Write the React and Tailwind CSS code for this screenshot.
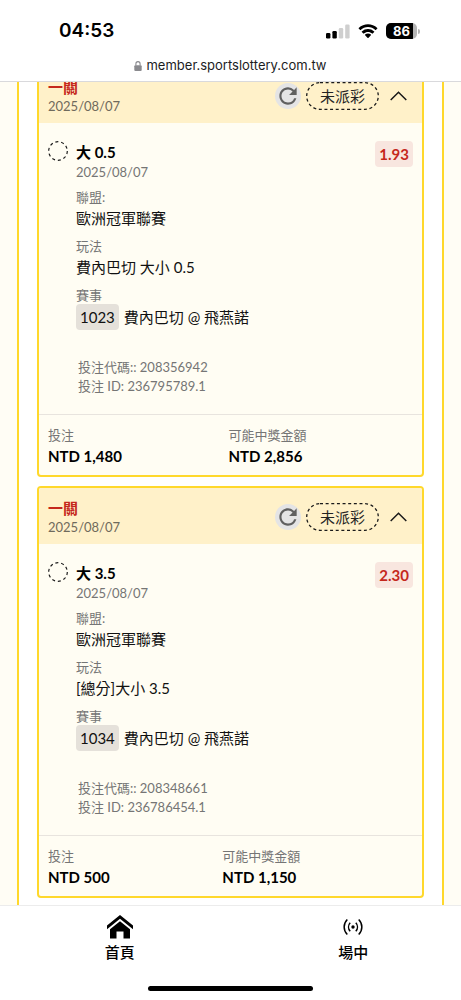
import { Fragment } from "react";
import { MdRefresh } from "react-icons/md";

const bets = [
  {
    title: "一關",
    date: "2025/08/07",
    status: "未派彩",
    pick: "大 0.5",
    odds: "1.93",
    details: [
      { label: "聯盟:", value: "歐洲冠軍聯賽" },
      { label: "玩法", value: "費內巴切 大小 0.5" },
    ],
    code: "1023",
    match: "費內巴切 @ 飛燕諾",
    betCode: "208356942",
    betId: "236795789.1",
    stake: "NTD 1,480",
    payout: "NTD 2,856",
  },
  {
    title: "一關",
    date: "2025/08/07",
    status: "未派彩",
    pick: "大 3.5",
    odds: "2.30",
    details: [
      { label: "聯盟:", value: "歐洲冠軍聯賽" },
      { label: "玩法", value: "[總分]大小 3.5" },
    ],
    code: "1034",
    match: "費內巴切 @ 飛燕諾",
    betCode: "208348661",
    betId: "236786454.1",
    stake: "NTD 500",
    payout: "NTD 1,150",
  },
];

const StatusBar = () => (
  <header className="shrink-0 border-b border-[#d9d9dc] bg-white pt-4 font-['Inter',sans-serif] text-black">
    <div className="flex h-[30px] items-center justify-between pr-[41px] pl-[59px]">
      <span className="text-[19px] font-semibold">04:53</span>
      <div className="flex items-center gap-2">
        {/* Signal */}
        <svg width="24" height="15" viewBox="0 0 24 15" aria-hidden="true">
          <rect x="0" y="9" width="4.4" height="5.5" rx="1.2" />
          <rect x="6.4" y="7" width="4.4" height="7.5" rx="1.2" />
          <rect x="12.8" y="4" width="4.4" height="10.5" rx="1.2" fill="#cfcfcf" />
          <rect x="19.2" y="0.5" width="4.4" height="14" rx="1.2" fill="#cfcfcf" />
        </svg>
        {/* Wifi */}
        <svg width="20" height="15" viewBox="0 0 20 15" aria-hidden="true">
          <path d="M10 3.1c2.8 0 5.4 1.1 7.3 2.9.2.2.4.2.6 0l1.4-1.5c.2-.2.2-.4 0-.6C14.1-1 5.9-1 .7 3.9c-.2.2-.2.4 0 .6L2.1 6c.2.2.4.2.6 0C4.6 4.2 7.2 3.1 10 3.1z" />
          <path d="M10 7.9c1.5 0 3 .6 4.1 1.6.2.2.4.2.6 0l1.5-1.5c.2-.2.2-.4 0-.6-3.5-3.3-8.900-3.300-12.400 0-.2.2-.2.4 0 .6l1.500 1.500c.2.2.4.2.6 0 1.100-1 2.600-1.600 4.100-1.600z" />
          <path d="M12.900 11.200c.2-.2.2-.4 0-.6-1.700-1.400-4.100-1.400-5.800 0-.2.2-.2.4 0 .6l2.600 2.700c.2.2.4.2.6 0z" />
        </svg>
        {/* Battery */}
        <div className="flex items-center gap-px">
          <div className="flex h-4 w-[31px] overflow-hidden rounded-[5px] bg-[#b5b5b5]">
            <span className="flex w-[27px] items-center justify-center bg-black pl-1 text-[13px] leading-4 font-bold text-white">
              86
            </span>
          </div>
          <div className="h-[5px] w-0.5 rounded-r-full bg-[#b5b5b5]"></div>
        </div>
      </div>
    </div>
    <div className="mt-[5px] flex h-[30px] items-center justify-center gap-1">
      <svg width="8" height="10" viewBox="0 0 8 10" aria-hidden="true">
        <rect x="0.3" y="4.2" width="7.4" height="5.8" rx="1.1" fill="#8a8a8e" />
        <path d="M1.9 4.6V2.9a2.1 2.3 0 0 1 4.2 0v1.7" fill="none" stroke="#8a8a8e" strokeWidth="1.1" />
      </svg>
      <span className="text-[13px] text-[#1c1c1e]">member.sportslottery.com.tw</span>
    </div>
  </header>
);

const BetCard = ({ bet }) => (
  <article className="shrink-0 overflow-hidden rounded-[4px] border-2 border-[#ffd82b] bg-[#fffdf3]">
    <div className="flex items-center justify-between bg-[#fff1c9] px-[9px] pt-[10px] pb-2">
      <div>
        <h2 className="text-[15px] leading-5 font-bold text-[#c5281c]">{bet.title}</h2>
        <p className="text-[13px] leading-[18px] text-[#6f6a5c]">{bet.date}</p>
      </div>
      <div className="flex items-center">
        <button
          aria-label="重新整理"
          className="flex size-[26px] items-center justify-center rounded-full bg-[#e4e4e5] text-[#606060]"
        >
          <MdRefresh size={26} />
        </button>
        <span className="relative ml-[5px] flex h-7 w-[73px] items-center justify-center text-[15px] text-[#222]">
          {/* Dashed outline */}
          <svg className="absolute inset-0 size-full" viewBox="0 0 73 28" fill="none" aria-hidden="true">
            <rect x="0.7" y="0.7" width="71.6" height="26.6" rx="13.3" stroke="#1a1a1a" strokeWidth="1.3" strokeDasharray="3 2.64" />
          </svg>
          {bet.status}
        </span>
        <button aria-label="收合" className="ml-[11px] pr-[6px]">
          <svg width="17" height="10" viewBox="0 0 17 10" fill="none" stroke="#1a1a1a" strokeWidth="1.5">
            <path d="M0.7 9 8.5 1.2 16.3 9" />
          </svg>
        </button>
      </div>
    </div>

    <div className="flex items-start gap-2 px-[9px] pt-[18px] pb-[18px]">
      <svg width="20" height="20" viewBox="0 0 20 20" fill="none" stroke="#1a1a1a" aria-hidden="true">
        <circle cx="10" cy="10" r="9.3" strokeWidth="1.2" strokeDasharray="3 2.84" />
      </svg>
      <div className="flex-1">
        <h3 className="text-[15px] leading-[22px] font-bold text-black">{bet.pick}</h3>
        <p className="text-[13px] leading-[18px] text-[#757575]">{bet.date}</p>
        <dl>
          {bet.details.map((item) => (
            <Fragment key={item.label}>
              <dt className="mt-[7px] text-[13px] leading-[18px] text-[#757575]">{item.label}</dt>
              <dd className="text-[15px] leading-6 text-[#111]">{item.value}</dd>
            </Fragment>
          ))}
          <dt className="mt-[7px] text-[13px] leading-[18px] text-[#757575]">賽事</dt>
          <dd className="flex items-center gap-[5px] text-[15px] leading-[26px] text-[#111]">
            <span className="rounded-[4px] bg-[#e5e1da] px-1">{bet.code}</span>
            {bet.match}
          </dd>
        </dl>
        <div className="mt-7 pl-0.5 text-[13px] leading-[19px] text-[#757575]">
          <p>投注代碼:: {bet.betCode}</p>
          <p>投注 ID: {bet.betId}</p>
        </div>
      </div>
      <span className="rounded-[4px] bg-[#f8e6df] px-1 text-[15px] leading-[26px] font-bold text-[#c5281c]">
        {bet.odds}
      </span>
    </div>

    <dl className="flex border-t border-[#e8e4de] px-[9px] pt-[11px] pb-[7px]">
      <div className="flex-auto">
        <dt className="text-[13px] leading-[18px] text-[#757575]">投注</dt>
        <dd className="text-[15px] leading-6 font-bold text-black">{bet.stake}</dd>
      </div>
      <div className="flex-auto">
        <dt className="text-[13px] leading-[18px] text-[#757575]">可能中獎金額</dt>
        <dd className="text-[15px] leading-6 font-bold text-black">{bet.payout}</dd>
      </div>
    </dl>
  </article>
);

const BottomNav = () => (
  <footer className="shrink-0 overflow-hidden border-t border-[#ececec] bg-white">
    <nav className="grid grid-cols-[51%_51%] pl-[3px] text-[15px] leading-5 font-medium text-black">
      <a href="#home" className="flex flex-col items-center gap-[3px] pt-[9px]">
        <svg width="26" height="24" viewBox="0 0 26 24" aria-hidden="true">
          <path d="M13 0 26 10.5v3.7L13 3.7 0 14.2v-3.7z" />
          <path d="M13 6.2 23 14.2V23.5h-6.5V16.5h-7v7H3V14.2z" />
        </svg>
        首頁
      </a>
      <a href="#live" className="flex flex-col items-center gap-[3px] pt-[9px]">
        <svg width="20" height="24" viewBox="0 0 20 24" fill="none" stroke="currentColor" strokeWidth="1.5" aria-hidden="true">
          <circle cx="10" cy="12" r="1.7" fill="currentColor" stroke="none" />
          <path d="M7.2 7.8c-2.2 2.4-2.2 6 0 8.4M12.8 7.8c2.2 2.4 2.2 6 0 8.4M4.3 4.5c-4.2 4.2-4.2 10.8 0 15M15.7 4.5c4.2 4.2 4.2 10.8 0 15" />
        </svg>
        場中
      </a>
    </nav>
    <div className="mx-auto mt-6 mb-[9px] h-[5px] w-[165px] rounded-full bg-black"></div>
  </footer>
);

const App = () => {
  return (
    <div className="flex h-screen flex-col bg-[#fffdf5] font-['Lato','Noto_Sans_CJK_TC',sans-serif]">
      <StatusBar />
      <main className="flex min-h-0 flex-1 px-[17px]">
        <div className="flex flex-1 flex-col justify-end gap-[9px] overflow-hidden border-x-2 border-[#ffd82b] bg-white px-[18px] pb-[7px]">
          {bets.map((bet) => (
            <BetCard key={bet.betId} bet={bet} />
          ))}
        </div>
      </main>
      <BottomNav />
    </div>
  );
};

export default App;
